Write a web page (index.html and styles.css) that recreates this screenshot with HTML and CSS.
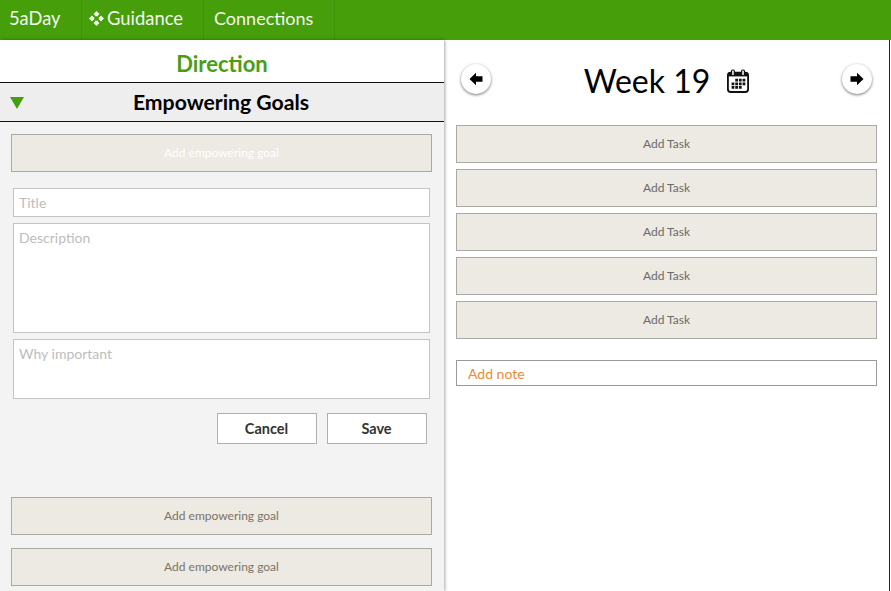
FILE: index.html
```html
<!DOCTYPE html>
<html lang="en">
<head>
    <meta charset="UTF-8">
    <meta name="viewport" content="width=device-width, initial-scale=1.0">
    <title>5aDay</title>
    <link rel="stylesheet" href="styles.css">
</head>
<body>
    <nav class="topbar">
        <a class="nav-item nav-brand">5aDay</a>
        <a class="nav-item nav-guidance">
            <svg class="nav-icon" viewBox="0 0 16 16" width="15" height="15">
                <path fill="currentColor" d="M8 0l3.200 3.200-1.700 1.500v.8H6.500v-.8L4.800 3.200zM8 16l-3.200-3.200 1.700-1.500v-.8h3v.8l1.700 1.500zM0 8l3.200-3.200 1.500 1.700h.8v3h-.8l-1.500 1.700zM16 8l-3.200 3.200-1.500-1.700h-.8v-3h.8l1.500-1.700z"/>
            </svg>
            <span>Guidance</span>
        </a>
        <a class="nav-item nav-connections">Connections</a>
    </nav>

    <div class="main">
        <section class="direction">
            <h1 class="direction-title">Direction</h1>
            <div class="goals-header">
                <span class="triangle"></span>
                <h2>Empowering Goals</h2>
            </div>
            <div class="goals-body">
                <div class="add-box add-goal add-active">Add empowering goal</div>
                <form class="goal-form">
                    <input class="field" type="text" placeholder="Title">
                    <textarea class="field field-desc" placeholder="Description"></textarea>
                    <textarea class="field field-why" placeholder="Why important"></textarea>
                    <div class="form-buttons">
                        <button type="button">Cancel</button>
                        <button type="button">Save</button>
                    </div>
                </form>
                <div class="add-box add-goal">Add empowering goal</div>
                <div class="add-box add-goal">Add empowering goal</div>
            </div>
        </section>

        <section class="week">
            <div class="week-header">
                <button class="round-btn" type="button" aria-label="Previous week">
                    <svg viewBox="0 0 14 14" width="14" height="14">
                        <path d="M0.500 7L7 0.800v3.400h6.500v5.600H7v3.400z"/>
                    </svg>
                </button>
                <div class="week-title">
                    <span>Week 19</span>
                    <svg class="calendar" viewBox="0 0 24 26" width="22" height="24">
                        <rect x="1" y="4" width="22" height="21" rx="3" fill="none" stroke="#111" stroke-width="2"/>
                        <rect x="1" y="4" width="22" height="4" fill="#111"/>
                        <rect x="5" y="1" width="3" height="6" rx="1" fill="#fff" stroke="#111" stroke-width="1.300"/>
                        <rect x="16" y="1" width="3" height="6" rx="1" fill="#fff" stroke="#111" stroke-width="1.300"/>
                        <path fill="#111" d="M9 10.500h3v3H9zM13 10.500h3v3h-3zM17 10.500h3v3h-3zM5 14.500h3v3H5zM9 14.500h3v3H9zM13 14.500h3v3h-3zM17 14.500h3v3h-3zM5 18.500h3v3H5zM9 18.500h3v3H9zM13 18.500h3v3h-3z"/>
                    </svg>
                </div>
                <button class="round-btn" type="button" aria-label="Next week">
                    <svg viewBox="0 0 14 14" width="14" height="14">
                        <path d="M13.500 7L7 0.800v3.400H0.500v5.600H7v3.400z"/>
                    </svg>
                </button>
            </div>
            <div class="tasks">
                <div class="add-box add-task">Add Task</div>
                <div class="add-box add-task">Add Task</div>
                <div class="add-box add-task">Add Task</div>
                <div class="add-box add-task">Add Task</div>
                <div class="add-box add-task">Add Task</div>
            </div>
            <div class="note">Add note</div>
        </section>
    </div>
</body>
</html>
```

FILE: styles.css
```css
* {
    box-sizing: border-box;
}
html, body {
    height: 100%;
}
body {
    margin: 0;
    font-family: Lato, "Open Sans", sans-serif;
    color: #333;
    background: #fff;
    overflow: hidden;
    display: flex;
    flex-direction: column;
}
.topbar {
    display: flex;
    height: 40px;
    flex-shrink: 0;
    background: #459e0a;
}
.nav-item {
    display: flex;
    align-items: center;
    padding: 0 0 4px 10px;
    color: #f4f8ef;
    font-size: 18px;
    border-right: 1px solid #3f9209;
}
.nav-brand {
    width: 82px;
    padding-left: 9px;
    font-size: 18.3px;
}
.nav-guidance {
    width: 122px;
    padding-left: 7px;
    gap: 3px;
}
.nav-guidance span {
    font-size: 18.4px;
}
.nav-connections {
    width: 131px;
}
.nav-icon {
    flex-shrink: 0;
    margin-top: 1px;
}
.main {
    flex: 1;
    display: flex;
    min-height: 0;
}
.direction {
    width: 444px;
    flex-shrink: 0;
    background: #f3f3f3;
    box-shadow: 1px 0 3px rgba(0, 0, 0, 0.35);
}
.direction-title {
    margin: 0;
    height: 43px;
    padding-top: 11px;
    background: #fff;
    border-bottom: 1px solid #111;
    color: #4a9e14;
    font-size: 22px;
    line-height: 26px;
    font-weight: 700;
    text-align: center;
}
.goals-header {
    position: relative;
    height: 39px;
    background: #eee;
    border-bottom: 1px solid #111;
}
.goals-header h2 {
    margin: 0;
    padding-right: 2px;
    color: #000;
    font-size: 21.2px;
    line-height: 38px;
    font-weight: 700;
    text-align: center;
}
.triangle {
    position: absolute;
    left: 10px;
    top: 14px;
    border-left: 7px solid transparent;
    border-right: 7px solid transparent;
    border-top: 12px solid #459e0a;
}
.goals-body {
    padding: 12px 12px 0 11px;
}
.add-box {
    display: flex;
    align-items: center;
    justify-content: center;
    padding-bottom: 2px;
    background: #ede9e3;
    border: 1px solid #a9a9a6;
    font-size: 12px;
    color: #6b6b6b;
}
.add-goal {
    height: 38px;
    margin-bottom: 13px;
    color: #7a7468;
}
.add-active {
    color: #fff;
    margin-bottom: 16px;
}
.goal-form {
    display: flex;
    flex-direction: column;
    gap: 6px;
    padding: 0 2px;
    height: 309px;
}
.field {
    display: block;
    width: 100%;
    height: 29px;
    padding: 5px;
    background: #fff;
    border: 1px solid #c4c4c4;
    border-radius: 0;
    outline: none;
    resize: none;
    font-family: Lato, sans-serif;
    font-size: 14px;
    line-height: 17px;
    color: #333;
}
.field::placeholder {
    color: #bdbdbd;
}
.field-desc {
    height: 110px;
}
.field-why {
    height: 60px;
}
.form-buttons {
    display: flex;
    justify-content: flex-end;
    gap: 10px;
    margin-top: 8px;
    padding-right: 3px;
}
.form-buttons button {
    width: 100px;
    height: 31px;
    padding: 0 1px 0 0;
    background: #fff;
    border: 1px solid #b0b0b0;
    border-radius: 0;
    font-family: Lato, sans-serif;
    font-size: 14.5px;
    font-weight: 700;
    color: #333;
}
.week {
    flex: 1;
    margin: 0 1px 0 2px;
    padding: 0 12px 0 10px;
    border-right: 1px solid #222;
}
.week-header {
    display: flex;
    align-items: flex-start;
    justify-content: space-between;
    height: 85px;
    padding: 20px 5px 0 5px;
}
.round-btn {
    display: flex;
    align-items: center;
    justify-content: center;
    width: 30px;
    height: 30px;
    margin-top: 4px;
    padding: 0;
    background: #fff;
    border: none;
    border-radius: 50%;
    box-shadow: 0 1px 3px rgba(0, 0, 0, 0.55);
}
.week-title {
    display: flex;
    align-items: center;
    gap: 17px;
    color: #000;
    font-size: 32px;
    line-height: 42px;
}
.calendar {
    flex-shrink: 0;
}
.tasks {
    display: flex;
    flex-direction: column;
    gap: 6px;
}
.add-task {
    height: 38px;
}
.note {
    margin-top: 21px;
    height: 26px;
    padding-left: 11px;
    border: 1px solid #9a9a9a;
    color: #f08a33;
    font-size: 14px;
    line-height: 26px;
}
```
